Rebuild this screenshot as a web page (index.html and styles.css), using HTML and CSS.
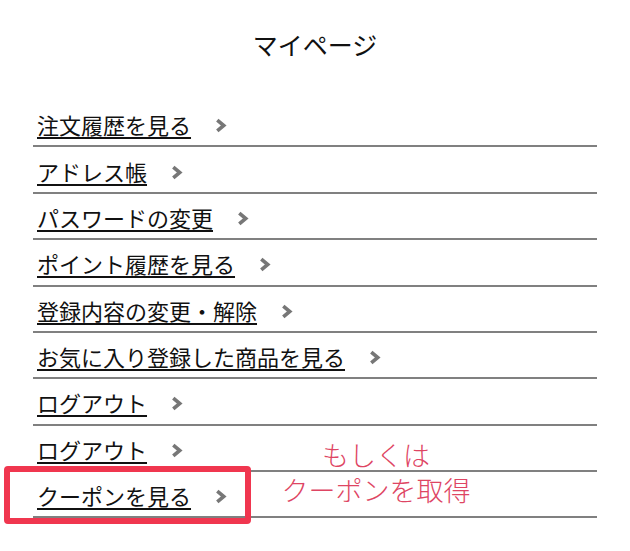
FILE: index.html
```html
<!DOCTYPE html>
<html lang="ja">
<head>
<meta charset="utf-8">
<link rel="stylesheet" href="styles.css">
</head>
<body>
<div class="page">
  <h1 class="title">マイページ</h1>
  <ul class="menu">
    <li class="row"><a class="link" href="#">注文履歴を見る</a><svg class="chev" viewBox="0 0 12 14"><polyline points="3,2 9,7 3,12"/></svg></li>
    <li class="row"><a class="link" href="#">アドレス帳</a><svg class="chev" viewBox="0 0 12 14"><polyline points="3,2 9,7 3,12"/></svg></li>
    <li class="row"><a class="link" href="#">パスワードの変更</a><svg class="chev" viewBox="0 0 12 14"><polyline points="3,2 9,7 3,12"/></svg></li>
    <li class="row"><a class="link" href="#">ポイント履歴を見る</a><svg class="chev" viewBox="0 0 12 14"><polyline points="3,2 9,7 3,12"/></svg></li>
    <li class="row"><a class="link" href="#">登録内容の変更・解除</a><svg class="chev" viewBox="0 0 12 14"><polyline points="3,2 9,7 3,12"/></svg></li>
    <li class="row"><a class="link" href="#">お気に入り登録した商品を見る</a><svg class="chev" viewBox="0 0 12 14"><polyline points="3,2 9,7 3,12"/></svg></li>
    <li class="row"><a class="link" href="#">ログアウト</a><svg class="chev" viewBox="0 0 12 14"><polyline points="3,2 9,7 3,12"/></svg></li>
    <li class="row"><a class="link" href="#">ログアウト</a><svg class="chev" viewBox="0 0 12 14"><polyline points="3,2 9,7 3,12"/></svg></li>
    <li class="row"><a class="link" href="#">クーポンを見る</a><svg class="chev" viewBox="0 0 12 14"><polyline points="3,2 9,7 3,12"/></svg></li>
  </ul>
  <div class="highlight"></div>
  <div class="note">
    <span>もしくは</span>
    <span>クーポンを取得</span>
  </div>
</div>
</body>
</html>
```
FILE: styles.css
```css
html, body {
  margin: 0;
  padding: 0;
  background: #fff;
}
body {
  font-family: "Noto Sans CJK JP", "Noto Sans", sans-serif;
  color: #111;
}
.page {
  position: relative;
  width: 630px;
  height: 551px;
}
.title {
  margin: 0;
  padding-top: 28px;
  height: 32px;
  font-size: 25px;
  font-weight: 400;
  line-height: 32px;
  text-align: center;
  color: #111;
}
.menu {
  list-style: none;
  margin: 41px 0 0 33px;
  padding: 0;
  width: 564px;
}
.row {
  display: flex;
  align-items: center;
  gap: 23px;
  height: 44.375px;
  box-sizing: content-box;
  border-bottom: 2px solid #808080;
  padding-left: 4px;
}
.link {
  font-size: 22px;
  line-height: 26px;
  color: #111;
  text-decoration: underline;
  text-decoration-thickness: 2px;
  text-underline-offset: 3px;
  margin-top: 2px;
}
.chev {
  width: 13px;
  height: 15px;
  margin-top: 5px;
  fill: none;
  stroke: #777;
  stroke-width: 3.4;
}
.highlight {
  position: absolute;
  left: 4px;
  top: 466px;
  width: 235px;
  height: 46px;
  border: 6px solid #f0364f;
  border-radius: 4px;
}
.note {
  position: absolute;
  left: 270px;
  top: 437px;
  width: 212px;
  display: flex;
  flex-direction: column;
  align-items: center;
  font-size: 27px;
  font-weight: 300;
  line-height: 35px;
  color: #de4563;
}
```
